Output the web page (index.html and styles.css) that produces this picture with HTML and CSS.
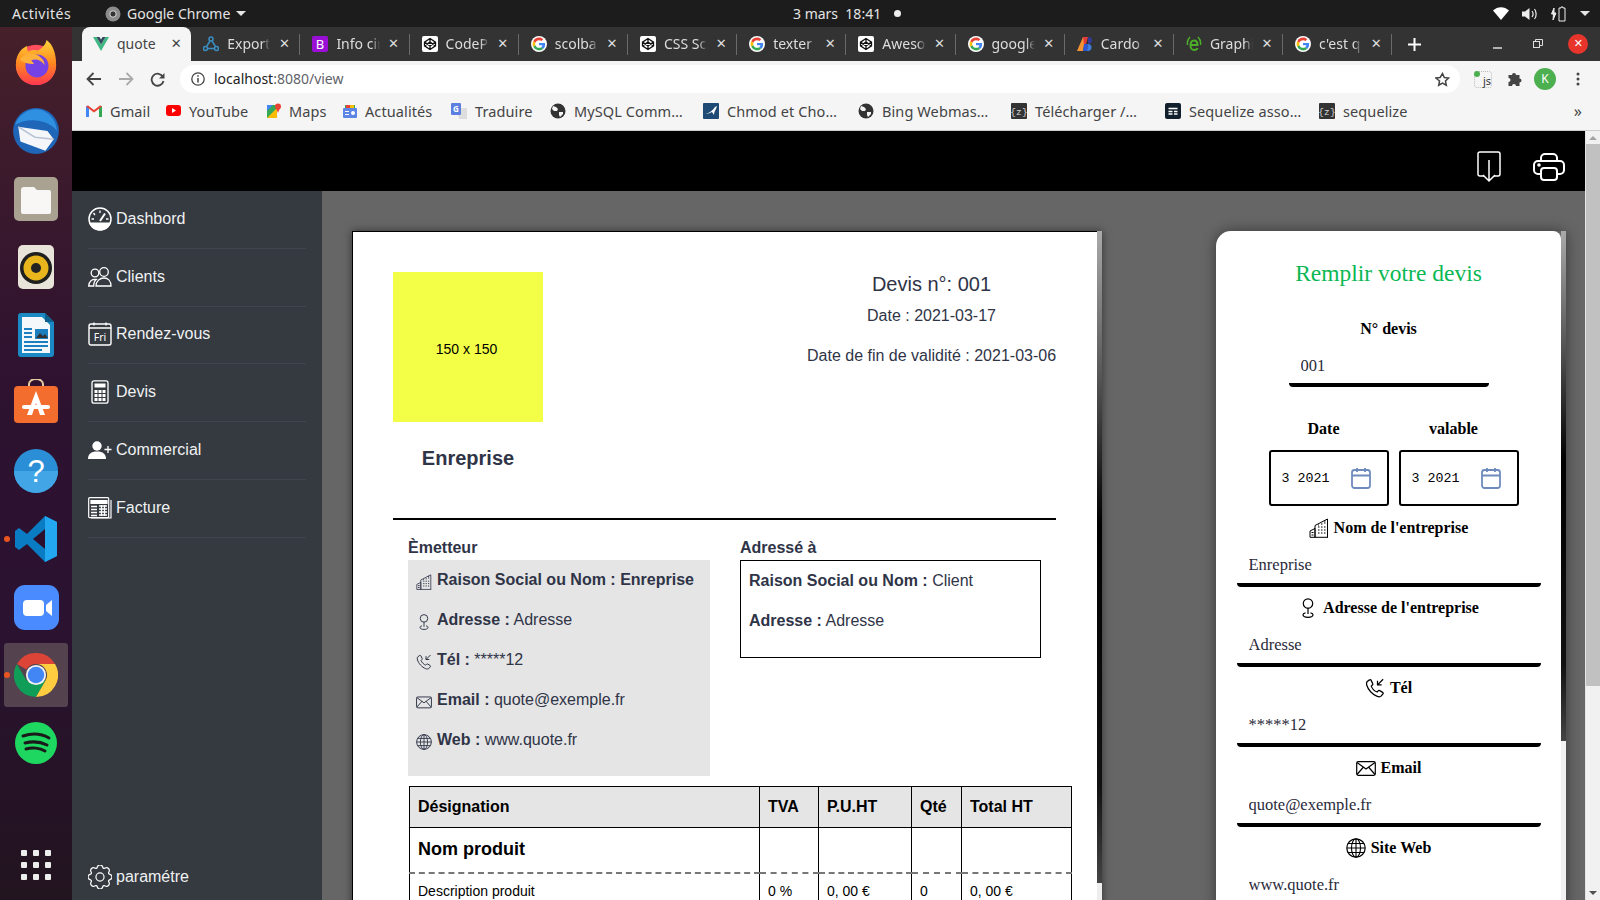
FILE: index.html
```html
<!DOCTYPE html>
<html lang="fr">
<head>
  <meta charset="UTF-8">
  <meta name="viewport" content="width=device-width, initial-scale=1.0">
  <title>quote</title>
  <link rel="stylesheet" href="styles.css">
</head>
<body>
  <!-- icones reutilisees -->
  <svg class="defs" xmlns="http://www.w3.org/2000/svg">
    <symbol id="g" viewBox="-6 -6 60 60">
      <circle cx="24" cy="24" r="30" fill="#fff"/>
      <path fill="#EA4335" d="M24 9.5c3.54 0 6.71 1.22 9.21 3.6l6.85-6.85C35.9 2.38 30.47 0 24 0 14.62 0 6.51 5.38 2.56 13.22l7.98 6.19C12.43 13.72 17.74 9.5 24 9.5z"/>
      <path fill="#4285F4" d="M46.98 24.55c0-1.57-.15-3.09-.38-4.55H24v9.02h12.94c-.58 2.96-2.26 5.48-4.78 7.18l7.73 6c4.51-4.18 7.09-10.36 7.09-17.65z"/>
      <path fill="#FBBC05" d="M10.53 28.59c-.48-1.45-.76-2.99-.76-4.59s.27-3.14.76-4.59l-7.98-6.19C.92 16.46 0 20.12 0 24c0 3.88.92 7.54 2.56 10.78l7.97-6.19z"/>
      <path fill="#34A853" d="M24 48c6.48 0 11.93-2.13 15.89-5.81l-7.73-6c-2.15 1.45-4.92 2.3-8.16 2.3-6.26 0-11.57-4.22-13.47-9.91l-7.98 6.19C6.51 42.62 14.62 48 24 48z"/>
    </symbol>
    <symbol id="codepen" viewBox="0 0 16 16">
      <rect width="16" height="16" rx="2" fill="#fff"/>
      <path d="M8 2.5l5.5 3.6v3.8L8 13.5 2.500 9.900V6.100zM2.500 6.100L8 9.900l5.500-3.800M2.500 9.900L8 6.100l5.500 3.800M8 2.500v3.600M8 9.900v3.600" fill="none" stroke="#111" stroke-width="1.300"/>
    </symbol>
    <symbol id="globe-dark" viewBox="0 0 16 16">
      <circle cx="8" cy="8" r="7.500" fill="#333"/>
      <path d="M3 3l3 1 2 2-1 2-3 0-2-2zM9 9l4 0 0 2-3 3-1-2z" fill="#f5f5f5"/>
    </symbol>
    <symbol id="building" viewBox="0 0 20 20">
      <path d="M1 19.300V13l5-2.500V19.300M6 19.300V7.500L18.500 1V19.300M1 19.300H19" fill="none" stroke="currentColor" stroke-width="1"/>
      <path d="M9 9h1.500M12 9h1.500M15 9h1.500M9 7h1M12 6h1.500M15 5h1.500M15 3h1.500M9 12h1.500M12 12h1.500M15 12h1.500M9 15h1.500M12 15h1.500M15 15h1.500M2.500 14.500h2M2.500 17h2" stroke="currentColor" stroke-width="1.200"/>
    </symbol>
    <symbol id="pin" viewBox="0 0 20 20">
      <circle cx="10" cy="5.500" r="4.700" fill="none" stroke="currentColor" stroke-width="1.200"/>
      <path d="M10 10v6M7.500 14.800c-1.800.4-2.500 1-2.500 2 0 1.400 2.200 2.500 5 2.500s5-1.100 5-2.500c0-1-.7-1.600-2.500-2" fill="none" stroke="currentColor" stroke-width="1.200"/>
    </symbol>
    <symbol id="phone" viewBox="0 0 16 16">
      <path d="M3.600 1.500L1.800 2.800C.6 4 1.300 7.300 4.500 11c3.300 3.500 7 4.800 8.300 3.500l1.500-1.700c.4-.5.300-1-.2-1.300l-2.300-1.400c-.5-.3-1-.2-1.300.2l-.8.900c-1.700-.6-4-2.900-4.700-4.700l.9-.9c.4-.3.400-.8.200-1.300L4.800 1.700c-.3-.5-.8-.5-1.200-.2z" fill="none" stroke="currentColor" stroke-width="1"/>
      <path d="M14.500 1L10 5.500M10 2.200v3.300h3.300" fill="none" stroke="currentColor" stroke-width="1"/>
    </symbol>
    <symbol id="mail" viewBox="0 0 20 16">
      <rect x=".7" y="1.700" width="18.600" height="13.600" rx="1.500" fill="none" stroke="currentColor" stroke-width="1.200"/>
      <path d="M1 2.500l9 6.500 9-6.500M1 14.500l6.500-7.500M19 14.500L12.500 7" fill="none" stroke="currentColor" stroke-width="1.200"/>
    </symbol>
    <symbol id="globe" viewBox="0 0 20 20">
      <circle cx="10" cy="10" r="9.200" fill="none" stroke="currentColor" stroke-width="1.200"/>
      <ellipse cx="10" cy="10" rx="4.500" ry="9.200" fill="none" stroke="currentColor" stroke-width="1.100"/>
      <path d="M10 1v18M1 10h18M2.300 5.500h15.400M2.300 14.500h15.400" stroke="currentColor" stroke-width="1.100"/>
    </symbol>
    <symbol id="calendar" viewBox="0 0 20 22">
      <rect x="1" y="3" width="18" height="18" rx="2.500" fill="none" stroke="currentColor" stroke-width="1.800"/>
      <path d="M1 8.500h18M6 1v4M14 1v4" stroke="currentColor" stroke-width="1.800"/>
    </symbol>
  </svg>

  <div class="topbar">
    <span class="top-activites">Activités</span>
    <span class="top-app">
      <svg width="16" height="16" viewBox="0 0 16 16"><circle cx="8" cy="8" r="7.500" fill="#8c8c8c"/><circle cx="8" cy="8" r="3.200" fill="#333" stroke="#ddd" stroke-width="1"/></svg>
      Google Chrome
      <i class="caret"></i>
    </span>
    <span class="top-clock">3 mars&nbsp; 18:41 <i class="top-dot"></i></span>
    <span class="top-tray">
      <svg class="tray-wifi" width="16" height="13" viewBox="0 0 16 13"><path d="M0 3.500C4.500-1 11.500-1 16 3.500L8 13z" fill="#fff"/></svg>
      <svg class="tray-vol" width="16" height="14" viewBox="0 0 16 14"><path d="M0 4.500h3L7.500 1v12L3 9.500H0z" fill="#eee"/><path d="M10 4c1.200 1.600 1.200 4.400 0 6M12.500 2c2.200 2.800 2.200 7.200 0 10" fill="none" stroke="#eee" stroke-width="1.200"/></svg>
      <svg class="tray-bat" width="16" height="16" viewBox="0 0 16 16"><path d="M3 2L0.500 8h2L2 14 5 7H3zM10 1h2v1h2v13H8V2h2z" fill="none" stroke="#eee" stroke-width="1"/><path d="M3 2L0.500 8h2L2 14 5 7H3z" fill="#eee"/></svg>
      <i class="caret"></i>
    </span>
  </div>

  <div class="desktop">
    <div class="dock">
      <div class="dock-item">
        <svg width="46" height="46" viewBox="0 0 48 48"><circle cx="24" cy="26" r="21" fill="#ff4f5e"/><path d="M3 26C3 14 10 8 15 6c-1 3 0 5 1 6 4-2 8-2 10-1 4-2 8-6 9-11 7 5 10 14 10 26 0 12-9 21-21 21S3 38 3 26z" fill="url(#ff)"/><circle cx="25" cy="27" r="12" fill="#7542e5"/><path d="M7 20c4-5 11-7 17-5 5 2 9 6 9 11-3-5-9-7-14-5l3 4c-6 0-11-1-15-5z" fill="#ffb13a"/><defs><linearGradient id="ff" x1="0" y1="0" x2="0" y2="1"><stop offset="0" stop-color="#ffd43a"/><stop offset=".5" stop-color="#ff8a1f"/><stop offset="1" stop-color="#ff3750"/></linearGradient></defs></svg>
      </div>
      <div class="dock-item">
        <svg width="50" height="50" viewBox="0 0 48 48"><circle cx="24" cy="24" r="22" fill="#1f66b8"/><path d="M4 18C8 6 22 0 32 5c8 4 12 12 12 19-7-10-26-14-40-6z" fill="#2f8fe0"/><path d="M7 20l28 4 6 8-8 11-24-9z" fill="#f4f6fa"/><path d="M7 20l16 10 18 2" fill="none" stroke="#b9c3d3" stroke-width="1.500"/></svg>
      </div>
      <div class="dock-item">
        <svg width="44" height="44" viewBox="0 0 44 44"><rect width="44" height="44" rx="5" fill="#a9a290"/><path d="M7 13a3 3 0 0 1 3-3h10l3 3h12a2 2 0 0 1 2 2v20a2 2 0 0 1-2 2H9a2 2 0 0 1-2-2z" fill="#f8f7f5"/></svg>
      </div>
      <div class="dock-item">
        <svg width="36" height="44" viewBox="0 0 36 44"><rect width="36" height="44" rx="5" fill="#e8e4da"/><circle cx="18" cy="23" r="16" fill="#1f1f1f"/><circle cx="18" cy="23" r="12.500" fill="#e9b51d"/><circle cx="18" cy="23" r="5" fill="#222"/></svg>
      </div>
      <div class="dock-item">
        <svg width="36" height="44" viewBox="0 0 36 44"><path d="M3 0h24l9 9v32a3 3 0 0 1-3 3H3a3 3 0 0 1-3-3V3a3 3 0 0 1 3-3z" fill="#1b8ac4"/><path d="M4 4h20l8 8v28H4z" fill="#f4f8fb"/><path d="M27 0l9 9h-9z" fill="#0f5f8e"/><path d="M6 16h8M6 20h8M6 24h8M6 29h24M6 33h24M6 37h18" stroke="#1b7fc0" stroke-width="2"/><rect x="17" y="16" width="13" height="10" fill="#1b7fc0"/><path d="M18 25l4-5 3 3 2-2 3 4z" fill="#333"/></svg>
      </div>
      <div class="dock-item dock-bag">
        <svg width="44" height="44" viewBox="0 0 44 44"><path d="M15 8V5a7 5 0 0 1 14 0v3" fill="none" stroke="#e8c9a0" stroke-width="2"/><rect y="7" width="44" height="37" rx="4" fill="#f26d2e"/><path d="M22 12l-9 24h5l4-12 4 12h5z" fill="#fff"/><rect x="8" y="26" width="28" height="4" rx="2" fill="#fff"/></svg>
      </div>
      <div class="dock-item">
        <svg width="44" height="44" viewBox="0 0 44 44"><circle cx="22" cy="22" r="22" fill="#2b8fd8"/><path d="M0 22a22 22 0 0 0 44 0z" fill="#42a5e6"/><text x="22" y="33" text-anchor="middle" font-size="31" font-family="Liberation Sans" fill="#fff">?</text></svg>
      </div>
      <div class="dock-item dock-running">
        <svg width="42" height="46" viewBox="0 0 42 46"><path d="M30 0l12 6v34l-12 6L12 28 4 34 0 31V15l4-3 8 6z" fill="#0a7cc4"/><path d="M30 0l12 6v34l-12 6z" fill="#23a7f1"/><path d="M30 13L18 23l12 10z" fill="#2b0f2c"/></svg>
      </div>
      <div class="dock-item">
        <svg width="45" height="45" viewBox="0 0 45 45"><rect width="45" height="45" rx="11" fill="#4a8cff"/><rect x="9" y="15" width="21" height="16" rx="4" fill="#fff"/><path d="M32 20l6-5v16l-6-5z" fill="#fff"/></svg>
      </div>
      <div class="dock-item dock-running dock-active">
        <svg width="44" height="44" viewBox="0 0 48 48"><path fill="#db4437" d="M3.200 12A24 24 0 0 1 44.800 12H24A12 12 0 0 0 13.600 18z"/><path fill="#0f9d58" d="M3.200 12A24 24 0 0 0 24 48L34.400 30H13.600z"/><path fill="#ffcd40" d="M44.800 12A24 24 0 0 1 24 48L34.400 30A12 12 0 0 0 24 12z"/><circle cx="24" cy="24" r="11" fill="#f1f1f1"/><circle cx="24" cy="24" r="9" fill="#4285f4"/></svg>
      </div>
      <div class="dock-item">
        <svg width="42" height="42" viewBox="0 0 42 42"><circle cx="21" cy="21" r="21" fill="#1ed760"/><path d="M8 14c9-3 19-2 26 2M10 21c8-2 16-1 22 2M11 27c6-2 14-1 19 2" fill="none" stroke="#1a1a1a" stroke-width="3" stroke-linecap="round"/></svg>
      </div>
      <div class="dock-grid">
        <i></i><i></i><i></i><i></i><i></i><i></i><i></i><i></i><i></i>
      </div>
    </div>

    <div class="window">
      <div class="tabstrip">
        <div class="tab tab-active">
          <svg width="16" height="14" viewBox="0 0 16 14"><path d="M0 0h3.500L8 7.500 12.500 0H16L8 14z" fill="#41b883"/><path d="M3.500 0h3L8 2.600 9.500 0h3L8 7.500z" fill="#35495e"/></svg>
          <span class="tab-title">quote</span><span class="tab-x">✕</span>
        </div>
        <div class="tab">
          <svg width="16" height="16" viewBox="0 0 16 16" fill="none" stroke="#3b8ec2" stroke-width="1.500"><circle cx="8" cy="3" r="2"/><circle cx="2.500" cy="12.500" r="2"/><circle cx="13.500" cy="12.500" r="2"/><path d="M7 5L3.500 10.700M9 5l3.500 5.700M4.500 12.500h7"/></svg>
          <span class="tab-title">Export</span><span class="tab-x">✕</span>
        </div>
        <div class="tab">
          <svg width="16" height="16" viewBox="0 0 16 16"><rect width="16" height="16" rx="2" fill="#9a0fd6"/><text x="8" y="13" text-anchor="middle" font-size="13" font-family="Noto Sans" fill="#fff">B</text></svg>
          <span class="tab-title">Info cir</span><span class="tab-x">✕</span>
        </div>
        <div class="tab"><svg width="16" height="16"><use href="#codepen"/></svg><span class="tab-title">CodeP</span><span class="tab-x">✕</span></div>
        <div class="tab"><svg width="16" height="16"><use href="#g"/></svg><span class="tab-title">scolba</span><span class="tab-x">✕</span></div>
        <div class="tab"><svg width="16" height="16"><use href="#codepen"/></svg><span class="tab-title">CSS Sc</span><span class="tab-x">✕</span></div>
        <div class="tab"><svg width="16" height="16"><use href="#g"/></svg><span class="tab-title">texter</span><span class="tab-x">✕</span></div>
        <div class="tab"><svg width="16" height="16"><use href="#codepen"/></svg><span class="tab-title">Aweso</span><span class="tab-x">✕</span></div>
        <div class="tab"><svg width="16" height="16"><use href="#g"/></svg><span class="tab-title">google</span><span class="tab-x">✕</span></div>
        <div class="tab">
          <svg width="16" height="14" viewBox="0 0 16 14"><path d="M0 14L6 0h3L6 14z" fill="#f59331"/><path d="M6 0h5l-2 7H7z" fill="#e23b3b"/><path d="M7 7h4l-1 7H6z" fill="#2c56d8"/><path d="M11 0c4 0 5 3 3 6l-3 1z" fill="#333a99"/><path d="M11 7c4 0 5 5 1 7h-2z" fill="#3e7fe0"/></svg>
          <span class="tab-title">Cardo</span><span class="tab-x">✕</span>
        </div>
        <div class="tab">
          <svg width="16" height="16" viewBox="0 0 16 16" fill="none" stroke="#4caf27" stroke-width="2"><path d="M4.500 9h7c0-3-1.500-4.500-3.500-4.500S4.500 6.500 4.500 9.500 6.500 14 8 14s3-.5 3.500-2"/><path d="M1.500 9C1 6 2 3 4 1M14.500 9C15 6 14 3 12 1" stroke-width="1.500"/></svg>
          <span class="tab-title">Graphi</span><span class="tab-x">✕</span>
        </div>
        <div class="tab"><svg width="16" height="16"><use href="#g"/></svg><span class="tab-title">c'est q</span><span class="tab-x">✕</span></div>
        <div class="tab-plus">
          <svg width="13" height="13" viewBox="0 0 13 13"><path d="M6.500 0v13M0 6.500h13" stroke="#fff" stroke-width="2"/></svg>
        </div>
        <div class="win-btns">
          <svg width="10" height="10" viewBox="0 0 10 10"><path d="M0 9h9" stroke="#ddd" stroke-width="1.500"/></svg>
          <svg width="10" height="10" viewBox="0 0 10 10" fill="none" stroke="#ddd"><rect x=".5" y="2.500" width="6" height="6"/><path d="M2.500 2.500V.5h7v6h-3" /></svg>
          <span class="win-close">✕</span>
        </div>
      </div>

      <div class="toolbar">
        <div class="nav-btns">
          <svg width="16" height="14" viewBox="0 0 16 14"><path d="M15 7H2M7.500 1L1.500 7l6 6" fill="none" stroke="#444" stroke-width="1.800"/></svg>
          <svg width="16" height="14" viewBox="0 0 16 14"><path d="M1 7h13M8.500 1l6 6-6 6" fill="none" stroke="#aaa" stroke-width="1.800"/></svg>
          <svg width="15" height="15" viewBox="0 0 15 15"><path d="M13 5A6 6 0 1 0 13.500 9" fill="none" stroke="#444" stroke-width="1.800"/><path d="M14.500 1v5.500H9z" fill="#444"/></svg>
        </div>
        <div class="omnibox">
          <svg width="14" height="14" viewBox="0 0 14 14"><circle cx="7" cy="7" r="6.200" fill="none" stroke="#444" stroke-width="1.300"/><path d="M7 6v4.500M7 3.200v1.500" stroke="#444" stroke-width="1.500"/></svg>
          <span class="url"><b>localhost</b>:8080/view</span>
          <svg class="star" width="15" height="15" viewBox="0 0 24 24"><path d="M12 2.500l2.900 6.300 6.900.8-5.100 4.700 1.400 6.800-6.100-3.400-6.100 3.400 1.400-6.800L1.300 9.600l6.900-.8z" fill="none" stroke="#444" stroke-width="2.400"/></svg>
        </div>
        <div class="ext-btns">
          <span class="ext-js"><i></i>js</span>
          <svg width="16" height="16" viewBox="0 0 16 16"><path d="M1 5h3.500a2 2 0 1 1 4 0H12v3.500a2 2 0 1 1 0 4V16H8.500a2 2 0 1 0-4 0H1v-4a2 2 0 1 0 0-4z" fill="#444" transform="translate(.5 -1)"/></svg>
          <span class="avatar">K</span>
          <svg width="4" height="14" viewBox="0 0 4 14" fill="#444"><circle cx="2" cy="2" r="1.500"/><circle cx="2" cy="7" r="1.500"/><circle cx="2" cy="12" r="1.500"/></svg>
        </div>
      </div>

      <div class="bookmarks">
        <a class="bm bm-gmail">
          <svg width="16" height="12" viewBox="0 0 16 12"><path d="M0 12V1.500L2 .500l1 1V12z" fill="#4285f4"/><path d="M13 12V1.500l1-1 2 1V12z" fill="#34a853"/><path d="M0 1.500L8 7.500l8-6-2-1L8 5 2 .5z" fill="#ea4335"/></svg>Gmail</a>
        <a class="bm bm-yt">
          <svg width="15" height="11" viewBox="0 0 15 11"><rect width="15" height="11" rx="3" fill="#f00"/><path d="M6 3l4 2.500L6 8z" fill="#fff"/></svg>YouTube</a>
        <a class="bm bm-maps">
          <svg width="14" height="16" viewBox="0 0 14 16"><path d="M0 2h10v13H0z" fill="#34a853"/><path d="M0 15L10 5v10z" fill="#fbbc05"/><path d="M0 2h6L0 8z" fill="#4285f4"/><circle cx="11" cy="3.500" r="3" fill="#ea4335"/><path d="M9 5l2 5 2-5z" fill="#ea4335"/></svg>Maps</a>
        <a class="bm bm-news">
          <svg width="14" height="14" viewBox="0 0 14 14"><path d="M2 1h10v4H2z" fill="#34a853"/><path d="M3 1h4v3H3z" fill="#ea4335"/><path d="M7 1h4v3H7z" fill="#fbbc05"/><rect y="4" width="14" height="10" rx="1" fill="#5c85e6"/><path d="M2 7h4v1H2zM2 10h4v1H2z" fill="#fff"/><circle cx="10" cy="9" r="2" fill="#fff"/></svg>Actualités</a>
        <a class="bm bm-trad">
          <svg width="16" height="16" viewBox="0 0 16 16"><path d="M6 5h10v11H8z" fill="#ddd"/><rect width="10" height="12" rx="1" fill="#5c7fe0"/><text x="5" y="9" text-anchor="middle" font-size="8" font-weight="700" font-family="Noto Sans" fill="#fff">G</text></svg>Traduire</a>
        <a class="bm bm-mysql"><svg width="16" height="16"><use href="#globe-dark"/></svg>MySQL Comm…</a>
        <a class="bm bm-chmod">
          <svg width="16" height="16" viewBox="0 0 16 16"><rect width="16" height="16" rx="1" fill="#1f4a75"/><path d="M2 11c5-1 8-4 10-7l2-1-1 3c-1 2-2 3-2 6l-2-3c-2 1-5 2-7 2z" fill="#fff"/></svg>Chmod et Cho…</a>
        <a class="bm bm-bing"><svg width="16" height="16"><use href="#globe-dark"/></svg>Bing Webmas…</a>
        <a class="bm bm-tele">
          <svg width="16" height="16" viewBox="0 0 16 16"><rect width="16" height="16" rx="1" fill="#333"/><text x="8" y="11.500" text-anchor="middle" font-size="9.500" font-family="Liberation Mono" fill="#ddd">{z}</text></svg>Télécharger /…</a>
        <a class="bm bm-seq">
          <svg width="16" height="16" viewBox="0 0 16 16"><rect width="16" height="16" rx="2" fill="#12202e"/><path d="M3.500 5.500h9M3.500 8.500h4M9 8.500h3.500M3.500 11h4M9 11h3.500" stroke="#fff" stroke-width="1.300"/></svg>Sequelize asso…</a>
        <a class="bm">
          <svg width="16" height="16" viewBox="0 0 16 16"><rect width="16" height="16" rx="1" fill="#333"/><text x="8" y="11.500" text-anchor="middle" font-size="9.500" font-family="Liberation Mono" fill="#ddd">{z}</text></svg>sequelize</a>
        <span class="bm-more">»</span>
      </div>

      <div class="page">
        <div class="page-body">
          <div class="navbar">
            <svg width="24" height="32" viewBox="0 0 24 32" fill="none" stroke="#fff" stroke-width="1.500"><path d="M7 25H3a2 2 0 0 1-2-2V3a2 2 0 0 1 2-2h18a2 2 0 0 1 2 2v20a2 2 0 0 1-2 2h-4"/><path d="M12 9v21M6 24l6 6 6-6"/></svg>
            <svg width="32" height="28" viewBox="0 0 32 28" fill="none" stroke="#fff" stroke-width="2"><path d="M8 8V5a4 4 0 0 1 4-4h8a4 4 0 0 1 4 4v3"/><path d="M8 21H5a4 4 0 0 1-4-4v-5a4 4 0 0 1 4-4h22a4 4 0 0 1 4 4v5a4 4 0 0 1-4 4h-3"/><rect x="8" y="15" width="16" height="12" rx="3"/><circle cx="6" cy="12" r=".8"/></svg>
          </div>
          <div class="content">
            <nav class="sidebar">
              <a class="side-link">
                <svg width="24" height="24" viewBox="0 0 24 24"><circle cx="12" cy="12" r="11" fill="none" stroke="#fff" stroke-width="1.500"/><path d="M1.500 15.500h21c-1 5-5 8-10.500 8S2.500 20.500 1.500 15.500z" fill="#fff"/><path d="M12 14L17 6.500" stroke="#fff" stroke-width="2"/><path d="M12 3.500v2.500M5.500 6l1.500 2M3.500 12H6M20.500 12H18" stroke="#fff" stroke-width="1.300"/></svg>
                Dashbord</a>
              <a class="side-link">
                <svg width="24" height="20" viewBox="0 0 24 20" fill="none" stroke="#fff" stroke-width="1.300"><circle cx="7" cy="6" r="3.800"/><circle cx="16" cy="5" r="4.300"/><path d="M8 19h15c0-5-3-8-7-8s-8 3-8 8zM.7 19h5c0-3 .5-5 2.500-6.500C4 12 1 14 .7 19z"/></svg>
                Clients</a>
              <a class="side-link">
                <svg width="24" height="24" viewBox="0 0 24 24"><rect x="1" y="2" width="22" height="21" rx="2" fill="none" stroke="#fff" stroke-width="1.400"/><path d="M1 6h22M6 .5v3M18 .5v3" stroke="#fff" stroke-width="1.400"/><text x="12" y="18.500" text-anchor="middle" font-size="10.500" font-family="Noto Sans" fill="#fff">Fri</text></svg>
                Rendez-vous</a>
              <a class="side-link">
                <svg width="24" height="24" viewBox="0 0 24 24"><rect x="4" y=".8" width="16" height="22.400" rx="2" fill="none" stroke="#fff" stroke-width="1.300"/><rect x="6.500" y="3.500" width="11" height="4" fill="#fff"/><path d="M6.500 10h3v3h-3zM10.500 10h3v3h-3zM14.500 10h3v3h-3zM6.500 14h3v3h-3zM10.500 14h3v3h-3zM14.500 14h3v3h-3zM6.500 18h3v3h-3zM10.500 18h3v3h-3zM14.500 18h3v3h-3z" fill="#fff"/></svg>
                Devis</a>
              <a class="side-link">
                <svg width="24" height="18" viewBox="0 0 24 18"><circle cx="9" cy="5" r="4.700" fill="#fff"/><path d="M0 18c0-5 3-7.500 9-7.500S18 13 18 18z" fill="#fff"/><path d="M20 5v7M16.500 8.500h7" stroke="#fff" stroke-width="1.300"/></svg>
                Commercial</a>
              <a class="side-link">
                <svg width="24" height="22" viewBox="0 0 24 22" fill="none" stroke="#fff" stroke-width="1.200"><rect x=".7" y=".7" width="20" height="20" rx="1"/><path d="M23 3v18H3"/><path d="M3 3.500h16v3H3z" fill="#fff"/><path d="M3 9.500h6M3 12.500h6M3 15.500h6M3 18.500h6M11 9h8M11 12h8M11 15h8M11 18h8M13.500 8v11M16.500 8v11" stroke-width="1.300"/></svg>
                Facture</a>
              <a class="side-link side-bottom">
                <svg width="24" height="24" viewBox="0 0 16 16" fill="none" stroke="#fff" stroke-width=".8"><circle cx="8" cy="8" r="2.700"/><path d="M9.796 1.343c-.527-1.790-3.065-1.790-3.592 0l-.094.319a.873.873 0 0 1-1.255.520l-.292-.160c-1.640-.892-3.433.902-2.540 2.541l.159.292a.873.873 0 0 1-.520 1.255l-.319.094c-1.790.527-1.790 3.065 0 3.592l.319.094a.873.873 0 0 1 .520 1.255l-.160.292c-.892 1.640.901 3.434 2.541 2.540l.292-.159a.873.873 0 0 1 1.255.520l.094.319c.527 1.790 3.065 1.790 3.592 0l.094-.319a.873.873 0 0 1 1.255-.520l.292.160c1.640.893 3.434-.902 2.540-2.541l-.159-.292a.873.873 0 0 1 .520-1.255l.319-.094c1.790-.527 1.790-3.065 0-3.592l-.319-.094a.873.873 0 0 1-.520-1.255l.160-.292c.893-1.640-.902-3.433-2.541-2.540l-.292.159a.873.873 0 0 1-1.255-.520z"/></svg>
                paramétre</a>
            </nav>

            <main class="main">
              <div class="paper-wrap">
                <section class="paper">
                  <div class="paper-head">
                    <div class="logo-col">
                      <div class="logo">150 x 150</div>
                      <h2 class="company">Enreprise</h2>
                    </div>
                    <div class="meta-col">
                      <h3 class="quote-no">Devis n°: 001</h3>
                      <p class="quote-date">Date : 2021-03-17</p>
                      <p class="quote-date quote-end">Date de fin de validité : 2021-03-06</p>
                    </div>
                  </div>
                  <hr class="rule">
                  <div class="parties">
                    <div class="party-from">
                      <h4 class="party-title">Èmetteur</h4>
                      <div class="from-box">
                        <p><svg><use href="#building"/></svg><span><b>Raison Social ou Nom : Enreprise</b></span></p>
                        <p><svg><use href="#pin"/></svg><span><b>Adresse :</b> Adresse</span></p>
                        <p><svg><use href="#phone"/></svg><span><b>Tél :</b> *****12</span></p>
                        <p><svg><use href="#mail"/></svg><span><b>Email :</b> quote@exemple.fr</span></p>
                        <p><svg><use href="#globe"/></svg><span><b>Web :</b> www.quote.fr</span></p>
                      </div>
                    </div>
                    <div class="party-to">
                      <h4 class="party-title">Adressé à</h4>
                      <div class="to-box">
                        <p><b>Raison Social ou Nom :</b> Client</p>
                        <p><b>Adresse :</b> Adresse</p>
                      </div>
                    </div>
                  </div>
                  <table class="items">
                    <thead>
                      <tr><th class="col-name">Désignation</th><th class="col-tva">TVA</th><th class="col-pu">P.U.HT</th><th class="col-qty">Qté</th><th class="col-total">Total HT</th></tr>
                    </thead>
                    <tbody>
                      <tr class="row-name"><td>Nom produit</td><td></td><td></td><td></td><td></td></tr>
                      <tr class="row-desc"><td>Description produit</td><td>0 %</td><td>0, 00 €</td><td>0</td><td>0, 00 €</td></tr>
                    </tbody>
                  </table>
                </section>
                <div class="thin-bar thin-bar-paper"><i></i></div>
              </div>

              <div class="card-wrap">
                <section class="card">
                  <h2 class="card-title">Remplir votre devis</h2>
                  <label class="lbl">N° devis</label>
                  <input class="field field-short" value="001">
                  <div class="dates">
                    <div class="date-col">
                      <label class="lbl">Date</label>
                      <div class="date-box"><span>3 2021</span><svg width="20" height="22"><use href="#calendar"/></svg></div>
                    </div>
                    <div class="date-col">
                      <label class="lbl">valable</label>
                      <div class="date-box"><span>3 2021</span><svg width="20" height="22"><use href="#calendar"/></svg></div>
                    </div>
                  </div>
                  <div class="group">
                    <label class="lbl"><svg><use href="#building"/></svg>Nom de l'entreprise</label>
                    <input class="field" value="Enreprise">
                  </div>
                  <div class="group">
                    <label class="lbl"><svg><use href="#pin"/></svg>Adresse de l'entreprise</label>
                    <input class="field" value="Adresse">
                  </div>
                  <div class="group">
                    <label class="lbl"><svg><use href="#phone"/></svg>Tél</label>
                    <input class="field" value="*****12">
                  </div>
                  <div class="group">
                    <label class="lbl"><svg><use href="#mail"/></svg>Email</label>
                    <input class="field" value="quote@exemple.fr">
                  </div>
                  <div class="group">
                    <label class="lbl"><svg><use href="#globe"/></svg>Site Web</label>
                    <input class="field" value="www.quote.fr">
                  </div>
                </section>
                <div class="thin-bar thin-bar-card"><i></i></div>
              </div>
            </main>
          </div>
        </div>
        <div class="page-scroll">
          <i class="arrow-up"></i>
          <div class="page-thumb"></div>
          <i class="arrow-down"></i>
        </div>
      </div>
    </div>
  </div>
</body>
</html>
```

FILE: styles.css
```css
* {
  padding: 0;
  margin: 0;
  box-sizing: border-box;
}
html, body {
  width: 1600px;
  height: 900px;
  overflow: hidden;
}
body {
  display: flex;
  flex-direction: column;
  font-family: "Liberation Sans", Arial, sans-serif;
  background-color: #1c1c1c;
}
.defs {
  position: absolute;
  width: 0;
  height: 0;
}

/* barre gnome */
.topbar {
  flex: none;
  display: flex;
  align-items: center;
  height: 27px;
  padding-left: 12px;
  background-color: #1c1c1c;
  color: #e4e4e4;
  font-family: "Noto Sans", sans-serif;
  font-size: 14px;
}
.top-activites {
  width: 93px;
  letter-spacing: 0.5px;
}
.top-app {
  display: flex;
  align-items: center;
  gap: 6px;
  width: 688px;
}
.caret {
  display: inline-block;
  border-left: 5px solid transparent;
  border-right: 5px solid transparent;
  border-top: 5px solid #e4e4e4;
}
.top-clock {
  display: flex;
  align-items: center;
  white-space: pre;
  font-size: 14px;
  width: 700px;
}
.top-dot {
  width: 7px;
  height: 7px;
  margin-left: 9px;
  border-radius: 50%;
  background-color: #eee;
}
.top-tray {
  display: flex;
  align-items: center;
  gap: 13px;
}

.desktop {
  flex: 1;
  display: flex;
  min-height: 0;
}

/* dock */
.dock {
  flex: none;
  display: flex;
  flex-direction: column;
  align-items: center;
  width: 72px;
  padding-top: 2px;
  background: linear-gradient(180deg, #46202a 0%, #2e1230 40%, #2a1230 70%, #22141f 100%);
}
.dock-item {
  position: relative;
  flex: none;
  display: flex;
  align-items: center;
  justify-content: center;
  width: 64px;
  height: 68px;
}
.dock-bag svg {
  margin-top: -4px;
}
.dock-running::before {
  content: "";
  position: absolute;
  left: 0;
  top: 31px;
  width: 6px;
  height: 6px;
  border-radius: 50%;
  background-color: #e95420;
}
.dock-active {
  height: 64px;
  margin: 2px 0;
  border-radius: 3px;
  background-color: #54424f;
}
.dock-active::before {
  top: 29px;
}
.dock-grid {
  display: grid;
  grid-template-columns: repeat(3, 6px);
  gap: 6px;
  margin-top: 73px;
}
.dock-grid i {
  height: 6px;
  border-radius: 1px;
  background-color: #eee;
}

.window {
  flex: 1;
  display: flex;
  flex-direction: column;
  min-width: 0;
}

/* onglets chrome */
.tabstrip {
  flex: none;
  display: flex;
  align-items: center;
  height: 34px;
  padding-left: 10px;
  background-color: #333334;
  font-family: "Noto Sans", sans-serif;
  font-size: 14px;
}
.tab {
  flex: none;
  display: flex;
  align-items: center;
  gap: 8px;
  width: 109.200px;
  height: 21px;
  padding: 0 9px 0 12px;
  border-right: 1px solid #6a6a6b;
  color: #ddd;
}
.tab svg {
  flex: none;
}
.tab-active {
  height: 34px;
  padding-left: 11px;
  border-right: 0;
  border-radius: 8px 8px 0 0;
  background-color: #f5f5f5;
  color: #444;
}
.tab-title {
  flex: 1;
  margin-top: -2px;
  overflow: hidden;
  white-space: nowrap;
  -webkit-mask-image: linear-gradient(90deg, #000 80%, transparent 100%);
  mask-image: linear-gradient(90deg, #000 80%, transparent 100%);
}
.tab-active .tab-title {
  -webkit-mask-image: none;
  mask-image: none;
}
.tab-x {
  flex: none;
  width: 12px;
  margin-top: -2px;
  font-size: 13px;
  text-align: center;
  font-family: "DejaVu Sans", sans-serif;
}
.tab-plus {
  flex: none;
  display: flex;
  margin-left: 16px;
}
.win-btns {
  display: flex;
  align-items: center;
  margin-left: 72px;
  gap: 30px;
}
.win-close {
  width: 20px;
  height: 20px;
  margin-left: -5px;
  border-radius: 50%;
  background-color: #e8352b;
  color: #fff;
  font-family: "DejaVu Sans", sans-serif;
  font-size: 11px;
  line-height: 20px;
  text-align: center;
}

/* barre d'adresse */
.toolbar {
  flex: none;
  display: flex;
  align-items: center;
  height: 32px;
  padding-top: 4px;
  background-color: #f5f5f5;
}
.nav-btns {
  display: flex;
  align-items: center;
  gap: 16px;
  width: 108px;
  padding-left: 14px;
}
.omnibox {
  display: flex;
  align-items: center;
  gap: 9px;
  width: 1280px;
  height: 28px;
  padding: 0 10px 0 11px;
  border-radius: 14px;
  background-color: #fff;
  font-family: "Noto Sans", sans-serif;
  font-size: 14px;
}
.url {
  flex: 1;
  margin-top: -2px;
  color: #5f6368;
}
.url b {
  font-weight: 400;
  color: #222;
}
.ext-btns {
  display: flex;
  align-items: center;
  padding-left: 14px;
  gap: 15px;
}
.ext-js {
  position: relative;
  width: 18px;
  height: 17px;
  border: 1px dotted #bbb;
  border-radius: 3px;
  font-family: "Noto Sans", sans-serif;
  font-size: 11px;
  line-height: 17px;
  text-align: right;
  color: #333;
}
.ext-js i {
  position: absolute;
  left: -1px;
  top: -1px;
  width: 6px;
  height: 6px;
  border-radius: 50%;
  background-color: #4caf50;
}
.avatar {
  width: 22px;
  height: 22px;
  margin: 0 5px 0 -4px;
  border-radius: 50%;
  background-color: #4caf50;
  color: #fff;
  font-family: "Noto Sans", sans-serif;
  font-size: 12px;
  line-height: 22px;
  text-align: center;
}

/* favoris */
.bookmarks {
  flex: none;
  display: flex;
  align-items: center;
  height: 38px;
  padding: 0 0 2px 14px;
  border-bottom: 1px solid #ccc;
  background-color: #f5f5f5;
  color: #444;
  font-family: "Noto Sans", sans-serif;
  font-size: 14.500px;
  letter-spacing: 0.1px;
}
.bm {
  flex: none;
  display: flex;
  align-items: center;
  gap: 8px;
  white-space: nowrap;
}
.bm-gmail { width: 80px; }
.bm-yt { width: 101px; }
.bm-maps { width: 76px; }
.bm-news { width: 108px; }
.bm-trad { width: 99px; }
.bm-mysql { width: 153px; }
.bm-chmod { width: 155px; }
.bm-bing { width: 153px; }
.bm-tele { width: 154px; }
.bm-seq { width: 154px; }
.bm-more {
  margin-left: auto;
  padding-right: 18px;
  font-size: 16px;
}

/* page */
.page {
  flex: 1;
  display: flex;
  min-height: 0;
}
.page-body {
  flex: 1;
  display: flex;
  flex-direction: column;
  min-width: 0;
}
.navbar {
  flex: none;
  display: flex;
  align-items: center;
  justify-content: flex-end;
  gap: 32px;
  height: 60px;
  padding: 12px 20px 0 0;
  background-color: #000;
}
.content {
  flex: 1;
  display: flex;
  min-height: 0;
}
.sidebar {
  flex: none;
  display: flex;
  flex-direction: column;
  width: 250px;
  padding: 0 16px;
  background-color: #343a40;
}
.side-link {
  flex: none;
  display: flex;
  align-items: center;
  gap: 4px;
  height: 57.800px;
  padding-bottom: 1px;
  border-bottom: 1px solid #3f454c;
  color: #f0f1f2;
  font-size: 16px;
}
.side-link svg {
  flex: none;
}
.side-bottom {
  margin-top: auto;
  height: 46px;
  padding-bottom: 0;
  border-bottom: 0;
}

.main {
  flex: 1;
  display: flex;
  gap: 114px;
  min-width: 0;
  overflow: hidden;
  padding: 40px 0 0 30px;
  background-color: #666;
}
.paper-wrap, .card-wrap {
  flex: none;
  display: flex;
  height: 800px;
}
.paper-wrap {
  width: 750px;
  box-shadow: 0 0 8px rgba(0, 0, 0, 0.5);
}
.card-wrap {
  width: 350px;
  border-radius: 15px 8px 0 0;
  box-shadow: 0 0 14px rgba(0, 0, 0, 0.45);
}
.thin-bar {
  flex: none;
  width: 5px;
}
.thin-bar i {
  display: block;
  background: linear-gradient(180deg, #aaa 0%, #000 45%, #111 85%, #444 100%);
}
.thin-bar-paper {
  background-color: #eee;
}
.thin-bar-paper i {
  height: 652px;
}
.thin-bar-card {
  background-color: #f2f2f2;
}
.thin-bar-card i {
  height: 510px;
}

/* devis */
.paper {
  flex: 1;
  padding: 40px 0 0 40px;
  border: 1px solid #000;
  border-right: 0;
  background-color: #fff;
  color: #2f3447;
}
.paper-head {
  display: flex;
  justify-content: space-between;
  width: 663px;
}
.logo-col {
  width: 150px;
}
.logo {
  display: flex;
  align-items: center;
  justify-content: center;
  height: 150px;
  padding: 3px 3px 0 0;
  background-color: #f3ff47;
  color: #000;
  font-size: 14px;
}
.company {
  margin-top: 24px;
  height: 24px;
  font-size: 20px;
  line-height: 24px;
  text-align: center;
}
.meta-col {
  width: 249px;
  text-align: center;
}
.quote-no {
  font-size: 20px;
  font-weight: 400;
  line-height: 24px;
}
.quote-date {
  margin-top: 10px;
  font-size: 16px;
  line-height: 20px;
}
.quote-end {
  margin-top: 20px;
  white-space: nowrap;
}
.rule {
  width: 663px;
  height: 2px;
  margin-top: 48px;
  border: 0;
  background-color: #000;
}
.parties {
  display: flex;
  gap: 30px;
  margin: 18px 0 0 15px;
}
.party-from {
  width: 302px;
}
.party-to {
  width: 301px;
}
.party-title {
  height: 22px;
  font-size: 16px;
  line-height: 20px;
}
.from-box {
  height: 216px;
  padding-left: 8px;
  background-color: #e5e5e5;
}
.from-box p {
  display: flex;
  align-items: center;
  gap: 5px;
  height: 40px;
  font-size: 16px;
}
.from-box svg {
  flex: none;
  width: 16px;
  height: 16px;
  margin-top: 4px;
}
.to-box {
  height: 98px;
  padding: 0 8px;
  border: 1px solid #000;
}
.to-box p {
  height: 40px;
  font-size: 16px;
  line-height: 40px;
}
.items {
  width: 662px;
  margin: 10px 0 0 16px;
  border-collapse: collapse;
  color: #000;
  table-layout: fixed;
}
.items th, .items td {
  padding: 0 8px;
  border: 1px solid #000;
  text-align: left;
}
.items th {
  height: 41px;
  background-color: #e5e5e5;
  font-size: 16px;
}
.col-name { width: 350px; }
.col-tva { width: 59px; }
.col-pu { width: 93px; }
.col-qty { width: 50px; }
.col-total { width: 110px; }
.row-name td {
  height: 45px;
  border-bottom: 2px dashed #777;
}
.row-name td:first-child {
  font-size: 18px;
  font-weight: 700;
}
.row-desc td {
  height: 36px;
  font-size: 14px;
}

/* formulaire */
.card {
  flex: 1;
  display: flex;
  flex-direction: column;
  align-items: center;
  overflow: hidden;
  border-radius: 15px 8px 0 0;
  background-color: #fff;
  color: #000;
  font-family: "Liberation Serif", "Times New Roman", serif;
}
.card-title {
  margin-top: 27px;
  color: #0ab853;
  font-size: 23.500px;
  font-weight: 400;
  line-height: 30px;
}
.lbl {
  display: flex;
  align-items: center;
  justify-content: center;
  gap: 5px;
  height: 20px;
  font-size: 16px;
  font-weight: 700;
  white-space: nowrap;
}
.lbl svg {
  flex: none;
  width: 20px;
  height: 20px;
}
.card-title + .lbl {
  margin-top: 31px;
}
.field {
  display: block;
  width: 304px;
  height: 41px;
  margin-top: 8px;
  padding: 0 12px;
  border: 0;
  border-bottom: 4px solid #000;
  border-radius: 0 0 4px 4px;
  background: #fff;
  color: #2a2a3a;
  font-family: inherit;
  font-size: 16.500px;
}
.field-short {
  width: 200px;
  height: 42px;
  margin-top: 6px;
  padding-top: 4px;
}
.dates {
  display: flex;
  gap: 10px;
  margin: 32px 0 0 10px;
}
.date-col {
  width: 120px;
}
.date-col .lbl {
  padding-right: 10px;
}
.date-box {
  display: flex;
  align-items: center;
  justify-content: space-between;
  height: 56px;
  margin-top: 11px;
  padding: 0 16px 0 11px;
  border: 2px solid #000;
  border-radius: 3px;
  font-family: "Liberation Mono", monospace;
  font-size: 13.333px;
  white-space: pre;
}
.date-box svg {
  color: #6f8bbd;
}
.group {
  flex: none;
  height: 80px;
}
.dates + .group {
  margin-top: 12px;
}

/* ascenseur de la page */
.page-scroll {
  flex: none;
  display: flex;
  flex-direction: column;
  align-items: center;
  width: 15px;
  border-left: 1px solid #e4e4e4;
  background-color: #f1f1f1;
}
.arrow-up {
  margin: 5px 0 4px;
  border-left: 4px solid transparent;
  border-right: 4px solid transparent;
  border-bottom: 4px solid #a3a3a3;
}
.page-thumb {
  width: 100%;
  height: 542px;
  background-color: #c1c1c1;
}
.arrow-down {
  margin-top: auto;
  margin-bottom: 5px;
  border-left: 4px solid transparent;
  border-right: 4px solid transparent;
  border-top: 4px solid #505050;
}
```
